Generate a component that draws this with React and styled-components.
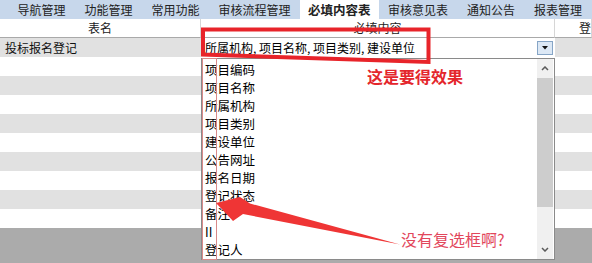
import styled, { createGlobalStyle } from 'styled-components'

const GlobalStyle = createGlobalStyle`
  html, body {
    margin: 0;
    padding: 0;
    background: #fff;
  }
  body {
    font-family: "Noto Sans CJK SC", "Liberation Sans", sans-serif;
    font-size: 12px;
    color: #111;
  }
`

const tabs = ['导航管理', '功能管理', '常用功能', '审核流程管理', '必填内容表', '审核意见表', '通知公告', '报表管理']
const options = ['项目编码', '项目名称', '所属机构', '项目类别', '建设单位', '公告网址', '报名日期', '登记状态', '备注', 'II', '登记人']

// Page
const Page = styled.div`
  position: relative;
  width: 592px;
  height: 263px;
  overflow: hidden;
  display: flex;
  flex-direction: column;
`

const TabBar = styled.div`
  height: 19px;
  flex: none;
  display: flex;
  padding-left: 8px;
  background: #c7d7eb;
  white-space: nowrap;
`

const Tab = styled.div`
  padding: 0 ${p => (p.$active ? '8px' : '9.5px')};
  line-height: 19px;
  color: #222;
  font-weight: ${p => (p.$active ? 700 : 400)};
  font-size: ${p => (p.$active ? '12.5px' : '12px')};
  background: ${p => (p.$active ? '#fff' : 'transparent')};
`

const Row = styled.div`
  flex: none;
  height: 19px;
  display: grid;
  grid-template-columns: 201px 354px 1fr;
  background: ${p => (p.$shade ? '#e1e1e1' : '#fff')};
`

const HeaderCell = styled.div`
  height: 18px;
  line-height: 18px;
  border-bottom: 1px solid #a9a9a9;
  border-right: 1px solid #d6d6d6;
  color: #222;
  text-align: ${p => (p.$left ? 'left' : 'center')};
  padding-left: ${p => (p.$left ? '24px' : '0')};
  white-space: nowrap;
  overflow: hidden;
`

const Cell = styled.div`
  line-height: 19px;
  padding-left: 5px;
  color: #111;
  white-space: nowrap;
`

const Combo = styled.div`
  display: flex;
  align-items: center;
  background: #fff;
  padding: 0 2px 0 4px;
`

const ComboText = styled.div`
  flex: 1;
  line-height: 19px;
  color: #000;
  white-space: nowrap;
`

const ComboButton = styled.div`
  width: 14px;
  height: 12px;
  border: 1px solid #86a5c6;
  background: #dce8f5;
  display: flex;
  align-items: center;
  justify-content: center;
`

const Filler = styled.div`
  flex: 1;
  background: #ababab;
`

// Dropdown list
const DropList = styled.div`
  position: absolute;
  left: 201px;
  top: 58px;
  width: 354px;
  height: 202px;
  box-sizing: border-box;
  border: 1px solid #8a8a8a;
  background: #fff;
  display: flex;
`

const Items = styled.div`
  flex: 1;
  padding: 2px 0 0 3px;
`

const Item = styled.div`
  height: 18px;
  line-height: 18px;
  font-size: 12.5px;
  color: #000;
  white-space: nowrap;
`

const Scrollbar = styled.div`
  width: 16px;
  margin-right: 1px;
  display: flex;
  flex-direction: column;
  background: #f0f0f0;
`

const ScrollArrow = styled.div`
  height: 19px;
  flex: none;
  display: flex;
  align-items: center;
  justify-content: center;
`

const Thumb = styled.div`
  height: 129px;
  flex: none;
  background: #cdcdcd;
`

const Track = styled.div`
  flex: 1;
`

// Annotations
const Overlay = styled.svg`
  position: absolute;
  left: 0;
  top: 0;
  pointer-events: none;
`

const Note = styled.div`
  position: absolute;
  left: ${p => p.$x}px;
  top: ${p => p.$y}px;
  font-size: 16px;
  line-height: 18px;
  white-space: nowrap;
  font-weight: ${p => (p.$bold ? 700 : 400)};
  color: ${p => (p.$bold ? '#e4262c' : '#e2475c')};
`

const Chevron = ({ down }) => (
  <svg width="8" height="5" viewBox="0 0 8 5">
    <polyline
      points={down ? '1,1 4,4 7,1' : '1,4 4,1 7,4'}
      fill="none"
      stroke="#5a5a5a"
      strokeWidth="1.5"
    />
  </svg>
)

const App = () => {
  const rows = Array.from({ length: 9 })

  return (
    <Page>
      <GlobalStyle />
      <TabBar>
        {tabs.map(t => (
          <Tab key={t} $active={t === '必填内容表'}>{t}</Tab>
        ))}
      </TabBar>

      <Row>
        <HeaderCell>表名</HeaderCell>
        <HeaderCell>必填内容</HeaderCell>
        <HeaderCell $left>登</HeaderCell>
      </Row>

      <Row $shade>
        <Cell>投标报名登记</Cell>
        <Combo>
          <ComboText>所属机构, 项目名称, 项目类别, 建设单位</ComboText>
          <ComboButton>
            <svg width="6" height="4" viewBox="0 0 6 4">
              <polygon points="0,0 6,0 3,3.5" fill="#111" />
            </svg>
          </ComboButton>
        </Combo>
        <Cell />
      </Row>

      {rows.map((_, i) => (
        <Row key={i} $shade={i % 2 === 1}>
          <Cell />
          <Cell />
          <Cell />
        </Row>
      ))}

      <Filler />

      <DropList>
        <Items>
          {options.map(o => (
            <Item key={o}>{o}</Item>
          ))}
        </Items>
        <Scrollbar>
          <ScrollArrow><Chevron /></ScrollArrow>
          <Thumb />
          <Track />
          <ScrollArrow><Chevron down /></ScrollArrow>
        </Scrollbar>
      </DropList>

      <Overlay width="592" height="263" viewBox="0 0 592 263">
        <rect x="202.5" y="58.5" width="14" height="201" fill="none" stroke="#d98a8a" strokeWidth="1" />
        <polygon
          points="203,29.5 428.5,29.5 428.5,62 203,54.5"
          fill="none"
          stroke="#e8242a"
          strokeWidth="4"
          strokeLinejoin="miter"
        />
        <polygon
          points="216,203 240,197 250,203.5 400,244.5 243,214 233,221"
          fill="#ef3535"
        />
      </Overlay>

      <Note $x={367} $y={67} $bold>这是要得效果</Note>
      <Note $x={401} $y={230}>没有复选框啊?</Note>
    </Page>
  )
}

export default App
